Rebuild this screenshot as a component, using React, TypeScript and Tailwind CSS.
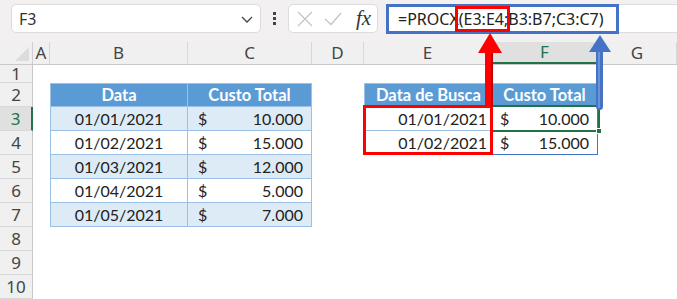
import React from "react";

const COLS = [
  { key: "A", w: 17 },
  { key: "B", w: 138 },
  { key: "C", w: 124 },
  { key: "D", w: 52 },
  { key: "E", w: 128 },
  { key: "F", w: 106 },
  { key: "G", w: 79 },
];

const cellFont = { fontFamily: "Lato, 'Noto Sans', sans-serif" };

type CellProps = { w: number; className?: string; children?: React.ReactNode };
function Cell({ w, className = "", children }: CellProps) {
  return (
    <div className={`h-full shrink-0 flex items-center ${className}`} style={{ width: w }}>
      {children}
    </div>
  );
}

function Money({ v, pl, pr }: { v: string; pl: string; pr: string }) {
  return (
    <div className={`flex w-full justify-between ${pl} ${pr}`}>
      <span>$</span>
      <span>{v}</span>
    </div>
  );
}

const data = [
  ["01/01/2021", "10.000"],
  ["01/02/2021", "15.000"],
  ["01/03/2021", "12.000"],
  ["01/04/2021", "5.000"],
  ["01/05/2021", "7.000"],
];

function RowHeader({ n, active }: { n: number; active?: boolean }) {
  return (
    <div
      className={`w-[33px] h-full shrink-0 flex items-center justify-center border-b border-[#d8d8d8] text-[17px] ${
        active ? "bg-[#e0e0e0] text-[#217346] border-r-2 border-r-[#217346]" : "bg-[#f0f0f0] text-[#444] border-r border-r-[#c8c8c8]"
      }`}
      style={{ fontFamily: "'Noto Sans', sans-serif" }}
    >
      {n}
    </div>
  );
}

export default function App() {
  const tb = "border-[#9bc2e6]";
  const hd = "bg-[#5b9bd5] text-white font-bold justify-center text-[16.5px]";
  return (
    <div className="relative w-[677px] h-[299px] overflow-hidden bg-white text-[#222]">
      {/* Formula bar */}
      <div className="h-[42px] bg-[#f2f0f0] flex items-start pt-[4px] pl-[11px]">
        <div
          className="w-[250px] h-[29px] rounded-[5px] border border-[#dedbdb] bg-white flex items-center justify-between pl-[7px] pr-[6px] text-[16px] text-[#333]"
          style={{ fontFamily: "'Noto Sans', sans-serif" }}
        >
          <span>F3</span>
          <svg width="14" height="10" viewBox="0 0 14 10">
            <path d="M2 3 L7 8 L12 3" fill="none" stroke="#444" strokeWidth="1.3" />
          </svg>
        </div>
        <div className="w-[27px] h-[29px] flex flex-col items-center justify-center gap-[2px]">
          <div className="w-[3px] h-[3px] bg-[#444]" />
          <div className="w-[3px] h-[3px] bg-[#444]" />
          <div className="w-[3px] h-[3px] bg-[#444]" />
        </div>
        <div className="w-[90px] h-[29px] rounded-[5px] border border-[#dedbdb] bg-white flex items-center pl-[7px]">
          <svg width="18" height="18" viewBox="0 0 18 18">
            <path d="M2 2 L16 16 M16 2 L2 16" stroke="#c4c4c4" strokeWidth="1.3" />
          </svg>
          <svg width="20" height="18" viewBox="0 0 20 18" className="ml-[9px]">
            <path d="M2 9 L8 14.5 L18 3" fill="none" stroke="#c4c4c4" strokeWidth="1.3" />
          </svg>
          <span
            className="ml-[13px] text-[21px] italic text-[#333] leading-none"
            style={{ fontFamily: "'Liberation Serif', serif" }}
          >
            fx
          </span>
        </div>
        <div
          className="ml-[8px] flex-1 h-[29px] rounded-l-[5px] border border-[#dedbdb] border-r-0 bg-white flex items-center pl-[11px] text-[16px] text-[#222]"
          style={{ fontFamily: "'Noto Sans', sans-serif" }}
        >
          =PROCX(E3:E4;B3:B7;C3:C7)
        </div>
      </div>

      {/* Column headers */}
      <div
        className="h-[23px] flex bg-[#f0f0f0] border-b border-[#c8c8c8] text-[17px] text-[#444]"
        style={{ fontFamily: "'Noto Sans', sans-serif" }}
      >
        <div className="w-[33px] h-full shrink-0 relative border-r border-[#d0d0d0]">
          <svg className="absolute right-[3px] bottom-[3px]" width="14" height="14" viewBox="0 0 14 14">
            <path d="M14 0 L14 14 L0 14 Z" fill="#dcdcdc" />
          </svg>
        </div>
        {COLS.map((c) => (
          <div
            key={c.key}
            className={`h-full shrink-0 flex items-center justify-center border-r border-[#d8d8d8] ${
              c.key === "F" ? "bg-[#e0e0e0] text-[#217346] border-b-2 border-b-[#217346]" : ""
            }`}
            style={{ width: c.w }}
          >
            {c.key}
          </div>
        ))}
      </div>

      {/* Rows */}
      <div className="text-[16px]" style={cellFont}>
        <div className="h-[18px] flex">
          <RowHeader n={1} />
        </div>
        <div className="h-[24px] flex">
          <RowHeader n={2} />
          <Cell w={17} />
          <Cell w={138} className={`${hd} border-l border-t border-r border-b ${tb}`}>
            Data
          </Cell>
          <Cell w={124} className={`${hd} border-t border-r border-b ${tb}`}>
            Custo Total
          </Cell>
          <Cell w={52} />
          <Cell w={128} className={`${hd} border-l border-t border-b ${tb}`}>
            Data de Busca
          </Cell>
          <Cell w={106} className={`${hd} border-t border-r border-b ${tb}`}>
            Custo Total
          </Cell>
        </div>
        {data.map(([d, v], i) => {
          const band = i % 2 === 0 ? "bg-[#ddebf7]" : "bg-white";
          const rowN = i + 3;
          return (
            <div key={d} className="h-[24px] flex">
              <RowHeader n={rowN} active={rowN === 3} />
              <Cell w={17} />
              <Cell w={138} className={`${band} justify-center border-l border-r border-b ${tb}`}>
                {d}
              </Cell>
              <Cell w={124} className={`${band} border-r border-b ${tb}`}>
                <Money v={v} pl="pl-[10px]" pr="pr-[8px]" />
              </Cell>
              {i < 2 ? (
                <>
                  <Cell w={52} />
                  <Cell w={128} className={`bg-white justify-end pr-[5px] border-l border-b ${tb}`}>
                    {d}
                  </Cell>
                  <Cell w={106} className="bg-white border-r border-b border-[#4472c4]">
                    <Money v={v} pl="pl-[8px]" pr="pr-[8px]" />
                  </Cell>
                </>
              ) : null}
            </div>
          );
        })}
        {[8, 9, 10].map((n) => (
          <div key={n} className="h-[24px] flex">
            <RowHeader n={n} />
          </div>
        ))}
      </div>

      {/* Selection on F3 */}
      <div className="absolute left-[491px] top-[105px] w-[109px] h-[27px] border-2 border-[#217346] pointer-events-none" />
      <div className="absolute left-[596px] top-[128px] w-[6px] h-[6px] bg-[#217346] border border-white" />

      {/* Annotation: blue formula box */}
      <div className="absolute left-[386px] top-[4px] w-[233px] h-[30px] border-[3px] border-[#4472c4]" />
      {/* Annotation: red box in formula */}
      <div className="absolute left-[455px] top-[6px] w-[55px] h-[26px] border-[3px] border-[#ff0000]" />
      {/* Annotation: red box around E3:E4 */}
      <div className="absolute left-[363px] top-[105px] w-[130px] h-[50px] border-[3px] border-[#ff0000]" />

      {/* Arrows */}
      <svg className="absolute left-0 top-0 pointer-events-none" width="677" height="299">
        <rect x="485" y="50" width="8" height="57" fill="#ff0000" />
        <rect x="491" y="50" width="2" height="57" fill="#c00000" />
        <path d="M490 33 L478 53 L502 53 Z" fill="#ff0000" />
        <rect x="596" y="48" width="7" height="62" rx="3.5" fill="#4472c4" />
        <rect x="598" y="48" width="2" height="60" fill="#6d93d6" />
        <path d="M600 35 L589 52 L611 52 Z" fill="#4472c4" />
      </svg>
    </div>
  );
}
